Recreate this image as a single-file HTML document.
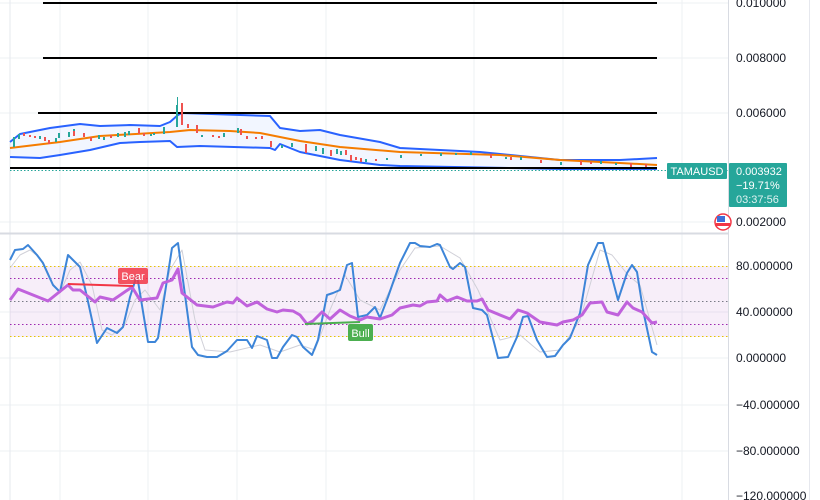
<!DOCTYPE html>
<html><head><meta charset="utf-8"><style>
body{margin:0;width:820px;height:500px;overflow:hidden;background:#fff;font-family:"Liberation Sans",sans-serif}
svg{position:absolute;left:0;top:0}
</style></head><body>
<svg width="820" height="500" viewBox="0 0 820 500" font-family="Liberation Sans, sans-serif">
<g stroke="#eef0f3" stroke-width="1">
<line x1="60" y1="0" x2="60" y2="500"/><line x1="148" y1="0" x2="148" y2="500"/><line x1="237" y1="0" x2="237" y2="500"/><line x1="326" y1="0" x2="326" y2="500"/><line x1="474" y1="0" x2="474" y2="500"/><line x1="563" y1="0" x2="563" y2="500"/><line x1="682" y1="0" x2="682" y2="500"/>
<line x1="0" y1="3" x2="728" y2="3"/><line x1="0" y1="58" x2="728" y2="58"/><line x1="0" y1="113" x2="728" y2="113"/><line x1="0" y1="222" x2="728" y2="222"/>
<line x1="0" y1="312" x2="728" y2="312"/><line x1="0" y1="358" x2="728" y2="358"/><line x1="0" y1="405" x2="728" y2="405"/><line x1="0" y1="451" x2="728" y2="451"/>
</g>
<line x1="10" y1="0" x2="10" y2="500" stroke="#e6e8ee"/>
<line x1="0" y1="233.5" x2="728" y2="233.5" stroke="#d8dbe2" stroke-width="2"/>
<line x1="728.5" y1="0" x2="728.5" y2="500" stroke="#d8dbe2"/>
<polygon fill="#2962ff" fill-opacity="0.06" points="10,142 20,134 50,128 80,124 100,126 130,125 160,126 170,122 178,115 182,113 270,116 280,128 300,131 320,130 340,135 380,142 400,148 480,152 560,160 620,160 657,158 657,169 560,169 400,166 380,165 340,160 300,152 280,144 275,150 270,148 200,146 177,147 170,141 140,142 120,143 90,150 60,155 40,158 10,157"/>
<g fill="none" stroke-linejoin="round">
<polyline stroke="#2962ff" stroke-width="2" points="10,142 20,134 50,128 80,124 100,126 130,125 160,126 170,122 178,115 182,113 270,116 280,128 300,131 320,130 340,135 380,142 400,148 480,152 560,160 620,160 657,158"/>
<polyline stroke="#2962ff" stroke-width="2" points="10,157 40,158 60,155 90,150 120,143 140,142 170,141 177,147 200,146 270,148 275,150 280,144 300,152 340,160 380,165 400,166 560,169 657,169"/>
<polyline stroke="#f57c00" stroke-width="2" points="10,148 60,142 100,136 170,132 190,130 230,131 260,133 280,137 300,141 340,147 400,152 500,155 560,160 620,163 657,165"/>
</g>
<g stroke="#000" stroke-width="2"><line x1="43" y1="3" x2="657" y2="3"/><line x1="43" y1="58" x2="657" y2="58"/><line x1="38" y1="113" x2="657" y2="113"/><line x1="10" y1="168" x2="657" y2="168"/></g>
<line x1="10" y1="170.5" x2="728" y2="170.5" stroke="#26a69a" stroke-dasharray="1.5,2"/>
<g fill="#26a69a"><rect x="13" y="137" width="2" height="10"/><rect x="18" y="134" width="2" height="5"/><rect x="39" y="136" width="2" height="3"/><rect x="55" y="138" width="2" height="4"/><rect x="58" y="133" width="2" height="5"/><rect x="68" y="132" width="2" height="5"/><rect x="73" y="129" width="2" height="6"/><rect x="98" y="135" width="2" height="4"/><rect x="103" y="137" width="2" height="3"/><rect x="117" y="133" width="2" height="4"/><rect x="124" y="132" width="2" height="5"/><rect x="128" y="131" width="2" height="4"/><rect x="150" y="134" width="2" height="2"/><rect x="153" y="133" width="2" height="2"/><rect x="163" y="127" width="2" height="7"/><rect x="176" y="105" width="2" height="22"/><rect x="177" y="97" width="1" height="10"/><rect x="201" y="135" width="2" height="2"/><rect x="223" y="133" width="2" height="4"/><rect x="237" y="128" width="2" height="5"/><rect x="281" y="145" width="2" height="3"/><rect x="291" y="143" width="2" height="4"/><rect x="315" y="146" width="2" height="5"/><rect x="322" y="148" width="2" height="6"/><rect x="336" y="149" width="2" height="5"/><rect x="340" y="151" width="2" height="4"/><rect x="365" y="159" width="2" height="3"/><rect x="386" y="158" width="2" height="2"/><rect x="400" y="155" width="2" height="3"/><rect x="420" y="154" width="2" height="2"/><rect x="440" y="153" width="2" height="3"/><rect x="455" y="153" width="2" height="2"/><rect x="470" y="152" width="2" height="3"/><rect x="505" y="157" width="2" height="2"/><rect x="520" y="157" width="2" height="3"/><rect x="560" y="162" width="2" height="3"/><rect x="600" y="161" width="2" height="3"/><rect x="615" y="163" width="2" height="2"/></g>
<g fill="#ef5350"><rect x="23" y="133" width="2" height="3"/><rect x="29" y="135" width="2" height="2"/><rect x="34" y="136" width="2" height="2"/><rect x="44" y="137" width="2" height="4"/><rect x="48" y="140" width="2" height="4"/><rect x="73" y="131" width="2" height="5"/><rect x="83" y="133" width="2" height="4"/><rect x="90" y="137" width="2" height="4"/><rect x="110" y="135" width="2" height="3"/><rect x="138" y="128" width="2" height="6"/><rect x="143" y="133" width="2" height="3"/><rect x="181" y="103" width="2" height="22"/><rect x="187" y="124" width="2" height="4"/><rect x="196" y="125" width="2" height="8"/><rect x="212" y="135" width="2" height="2"/><rect x="218" y="136" width="2" height="2"/><rect x="240" y="129" width="2" height="6"/><rect x="246" y="136" width="2" height="3"/><rect x="255" y="137" width="2" height="2"/><rect x="261" y="136" width="2" height="3"/><rect x="270" y="141" width="2" height="6"/><rect x="305" y="144" width="2" height="9"/><rect x="330" y="150" width="2" height="6"/><rect x="345" y="150" width="2" height="5"/><rect x="350" y="155" width="2" height="6"/><rect x="355" y="157" width="2" height="3"/><rect x="360" y="158" width="2" height="4"/><rect x="375" y="159" width="2" height="2"/><rect x="490" y="154" width="2" height="4"/><rect x="510" y="157" width="2" height="3"/><rect x="540" y="160" width="2" height="3"/><rect x="580" y="161" width="2" height="4"/><rect x="590" y="162" width="2" height="2"/><rect x="630" y="163" width="2" height="4"/><rect x="645" y="164" width="2" height="3"/></g>
<rect x="10" y="266" width="718" height="71" fill="#9c27b0" fill-opacity="0.08"/>
<g stroke-dasharray="1.5,2.5" stroke-width="1">
<line x1="10" y1="266.5" x2="728" y2="266.5" stroke="#e6c400"/><line x1="10" y1="336.5" x2="728" y2="336.5" stroke="#e6c400"/>
<line x1="10" y1="278.5" x2="728" y2="278.5" stroke="#9c27b0"/><line x1="10" y1="324.5" x2="728" y2="324.5" stroke="#9c27b0"/>
<line x1="10" y1="301.5" x2="728" y2="301.5" stroke="#787b86"/>
</g>
<g fill="none" stroke-linejoin="round">
<polyline stroke="#d0d0d8" stroke-width="1" points="10,268 20,255 30,250 40,258 50,280 60,293 70,270 80,262 92,285 102,330 112,335 125,325 135,300 145,290 160,310 170,270 182,250 195,320 205,350 230,352 260,345 280,352 300,345 315,350 330,310 345,275 360,300 380,310 400,270 415,248 440,246 460,258 478,290 500,340 520,335 540,352 560,350 580,320 600,250 612,255 628,275 640,285 657,345"/>
<polyline stroke="#3d85d8" stroke-width="2" points="10,260 15,250 23,249 28,245 37,255 43,263 53,285 60,292 68,255 80,267 87,297 97,343 107,328 117,333 123,327 130,297 137,275 148,342 155,342 158,338 167,280 172,248 178,243 192,347 198,355 207,357 217,357 227,351 237,340 247,340 252,348 257,336 267,340 272,358 277,358 283,347 292,335 297,337 303,347 312,355 318,340 327,295 333,293 340,290 347,265 352,263 358,317 367,315 375,307 380,318 388,297 395,277 400,263 410,243 415,243 420,246 430,247 437,244 440,245 450,267 453,269 460,263 465,267 473,308 482,310 487,315 498,358 508,357 517,337 523,317 528,316 537,340 547,357 555,356 563,345 570,338 580,313 588,265 598,243 603,243 608,262 618,300 627,273 632,265 637,272 643,310 652,352 657,355"/>
<polyline stroke="#c062dc" stroke-width="3" points="10,300 18,289 33,295 48,301 58,293 68,285 73,290 80,290 95,302 100,297 113,300 132,287 140,300 157,298 163,283 172,280 178,269 182,293 197,305 213,307 227,302 233,303 237,298 247,306 257,302 267,309 277,312 283,310 293,311 300,315 307,324 313,321 322,312 330,319 340,310 350,316 360,320 367,317 380,319 392,315 400,308 413,305 420,306 427,302 437,301 440,295 447,301 457,297 467,301 477,301 482,299 488,310 500,315 510,319 518,310 527,313 540,322 557,325 563,322 573,320 582,315 590,303 602,302 607,312 618,315 627,302 633,308 642,312 652,323 657,322"/>
</g>
<line x1="68" y1="284" x2="133" y2="286" stroke="#f23645" stroke-width="2"/>
<rect x="118" y="268" width="30" height="16" rx="2" fill="#f23645" fill-opacity="0.85"/>
<text x="133" y="280" font-size="11" fill="#fff" text-anchor="middle">Bear</text>
<line x1="305" y1="324" x2="360" y2="322" stroke="#4caf50" stroke-width="2"/>
<rect x="348" y="324" width="25" height="17" rx="2" fill="#4caf50"/>
<text x="360.5" y="337" font-size="11" fill="#fff" text-anchor="middle">Bull</text>
<rect x="667" y="163" width="60" height="16" rx="1" fill="#26a69a"/>
<text x="697" y="175" font-size="11" fill="#fff" text-anchor="middle">TAMAUSD</text>
<rect x="729" y="163" width="58" height="44" rx="1" fill="#26a69a"/>
<text x="736" y="175" font-size="11" fill="#fff">0.003932</text>
<text x="736" y="189" font-size="11" fill="#fff">−19.71%</text>
<text x="736" y="203" font-size="11" fill="#e0f2f1">03:37:56</text>
<circle cx="723" cy="222" r="8" fill="#fff" stroke="#f23645" stroke-width="1.5"/>
<rect x="717" y="216" width="8" height="6" fill="#3d6fd8"/>
<rect x="716" y="223" width="14" height="3" fill="#f23645"/>
<g font-size="12" fill="#131722">
<text x="736" y="7">0.010000</text><text x="736" y="62">0.008000</text><text x="736" y="117">0.006000</text><text x="736" y="226">0.002000</text>
<text x="736" y="270">80.000000</text><text x="736" y="316">40.000000</text><text x="736" y="362">0.000000</text><text x="736" y="409">−40.000000</text><text x="736" y="455">−80.000000</text><text x="736" y="500">−120.000000</text>
</g>
<line x1="809.5" y1="0" x2="809.5" y2="500" stroke="#e6e8ee"/>
</svg>
</body></html>
